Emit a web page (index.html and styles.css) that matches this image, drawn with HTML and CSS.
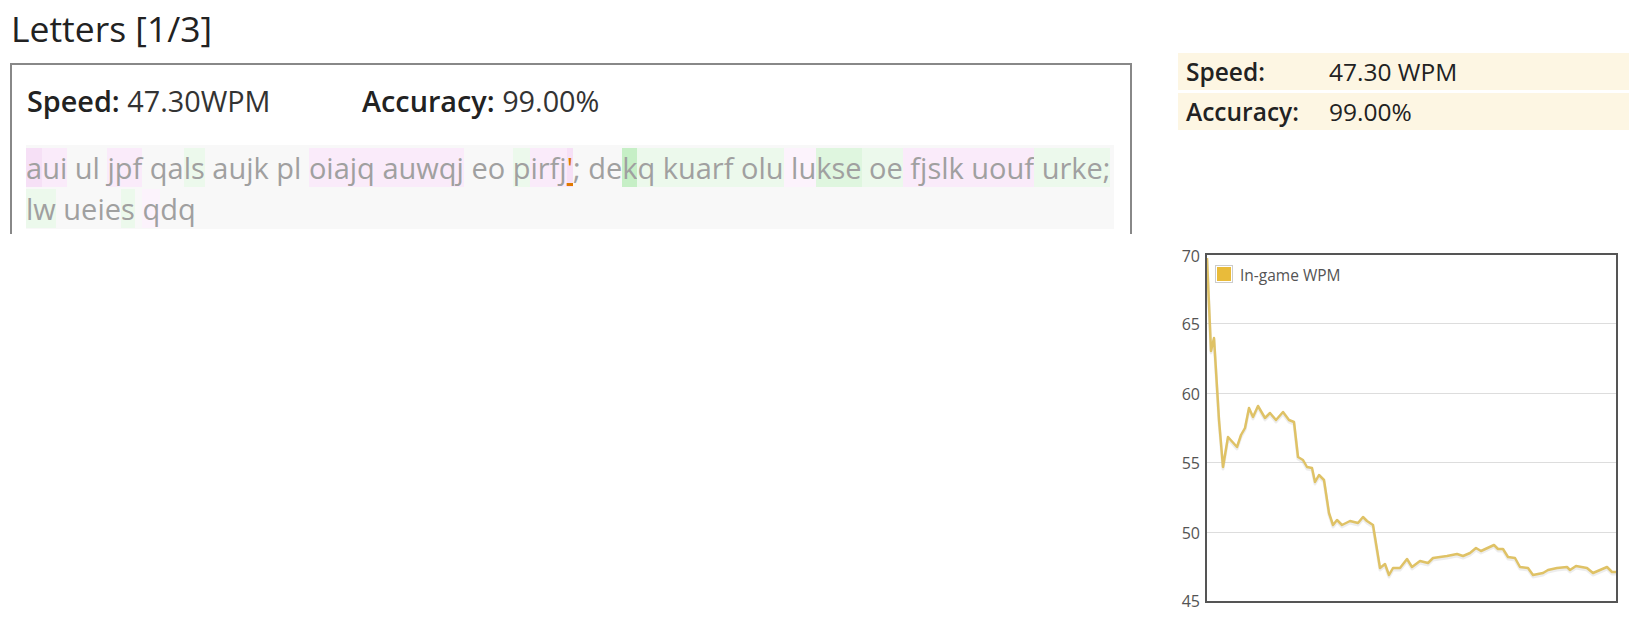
FILE: index.html
```html
<!DOCTYPE html>
<html>
<head>
<meta charset="utf-8">
<link rel="stylesheet" href="styles.css">
</head>
<body>
<div class="page">
  <div class="main">
    <h1 class="title">Letters [1/3]</h1>
    <div class="panel">
      <div class="stats">
        <div class="stat stat-speed"><b>Speed:</b> 47.30WPM</div>
        <div class="stat"><b>Accuracy:</b> 99.00%</div>
      </div>
      <div class="typed"><span class="p2">a</span><span class="p1">ui</span> ul <span class="p1">jpf</span> qa<span class="g1">ls</span> aujk pl <span class="p1">oiajq auwqj</span> eo <span class="g1">p</span><span class="p1">irfj</span><span class="p2 cur">'</span>; de<span class="g3">k</span><span class="g1">q kuarf olu</span><span class="p0"> lu</span><span class="g2">kse</span><span class="g1"> oe</span><span class="p1"> fjslk uouf</span><span class="g1"> urke;</span> <span class="g1">lw</span> ueie<span class="g1">s</span> <span class="p0">q</span>dq</div>
    </div>
  </div>
  <div class="side">
    <div class="summary">
      <div class="row"><span class="label">Speed:</span><span class="value">47.30 WPM</span></div>
      <div class="row"><span class="label">Accuracy:</span><span class="value">99.00%</span></div>
    </div>
    <svg class="chart" width="451" height="378" viewBox="0 0 451 378">
      <g class="grid">
        <line x1="29" y1="83.5" x2="438" y2="83.5"/>
        <line x1="29" y1="153.5" x2="438" y2="153.5"/>
        <line x1="29" y1="222.5" x2="438" y2="222.5"/>
        <line x1="29" y1="292.5" x2="438" y2="292.5"/>
      </g>
      <g class="ylabels">
        <text x="22" y="22">70</text>
        <text x="22" y="90">65</text>
        <text x="22" y="160">60</text>
        <text x="22" y="229">55</text>
        <text x="22" y="299">50</text>
        <text x="22" y="367">45</text>
      </g>
      <polyline class="shadow" points="29,18 33,111 36,98 41,180 45,227 50,197 59,207 63,195 67,188 71,168 75,177 80,166 87,178 92,173 98,180 105,172 111,180 116,182 120,217 125,220 129,227 134,228 137,242 141,235 146,240 151,273 155,285 159,280 164,285 172,281 180,283 185,277 189,281 195,285 202,328 207,324 211,335 215,328 222,328 229,319 234,327 242,321 250,323 255,318 269,316 279,314 285,316 292,313 298,308 303,311 316,305 320,309 325,309 330,317 337,318 342,327 350,328 355,335 365,333 370,330 379,328 389,327 392,330 398,326 409,328 415,333 429,327 434,332 438,332"/>
      <polyline class="series" points="29,18 33,111 36,98 41,180 45,227 50,197 59,207 63,195 67,188 71,168 75,177 80,166 87,178 92,173 98,180 105,172 111,180 116,182 120,217 125,220 129,227 134,228 137,242 141,235 146,240 151,273 155,285 159,280 164,285 172,281 180,283 185,277 189,281 195,285 202,328 207,324 211,335 215,328 222,328 229,319 234,327 242,321 250,323 255,318 269,316 279,314 285,316 292,313 298,308 303,311 316,305 320,309 325,309 330,317 337,318 342,327 350,328 355,335 365,333 370,330 379,328 389,327 392,330 398,326 409,328 415,333 429,327 434,332 438,332"/>
      <rect class="frame" x="28" y="14" width="411" height="348"/>
      <rect class="swatch-box" x="37.5" y="25.5" width="17" height="17"/>
      <rect class="swatch" x="39" y="27" width="14" height="14"/>
      <text class="legend" x="62" y="41">In-game WPM</text>
    </svg>
  </div>
</div>
</body>
</html>
```

FILE: styles.css
```css
html, body {
  margin: 0;
  padding: 0;
  background: #ffffff;
}

body {
  font-family: "Open Sans", "DejaVu Sans", sans-serif;
  color: #222222;
  overflow: hidden;
}

.page {
  display: flex;
  align-items: flex-start;
  padding-left: 10px;
}

.main {
  width: 1122px;
  flex: none;
}

.title {
  margin: 0;
  padding: 4px 0 0 1px;
  font-size: 35.5px;
  line-height: 48px;
  font-weight: normal;
  color: #222222;
}

.panel {
  margin-top: 11px;
  border: 2px solid #888888;
  border-bottom: none;
  padding: 17px 16px 5px 14px;
}

.stats {
  display: flex;
  font-size: 28.8px;
  line-height: 38px;
  color: #333333;
  padding-left: 1px;
}

.stat b {
  color: #222222;
  font-weight: 600;
}

.stat-speed {
  width: 335px;
}

.typed {
  margin-top: 25px;
  padding-top: 2px;
  background: #f8f8f8;
  color: #a0a0a0;
  font-size: 29px;
  line-height: 41px;
}

.p0 { background: #fcf3fc; }
.p1 { background: #faebfa; }
.p2 { background: #f6e0f6; }
.g1 { background: #ecf9ec; }
.g2 { background: #dff6df; }
.g3 { background: #c6efc6; }

.cur {
  color: #e07a00;
  text-decoration: underline;
  text-decoration-color: #e07a00;
  text-decoration-thickness: 3px;
  text-underline-offset: 4px;
}

.side {
  margin-left: 46px;
  width: 451px;
  flex: none;
}

.summary {
  margin-top: 53px;
  display: flex;
  flex-direction: column;
  gap: 3px;
}

.row {
  display: grid;
  grid-template-columns: 143px 1fr;
  height: 37px;
  line-height: 37px;
  padding-left: 8px;
  background: #fdf6e3;
  font-size: 24.5px;
  color: #222222;
}

.label {
  font-weight: 600;
}

.chart {
  display: block;
  margin-top: 110px;
  font-family: "Open Sans", "DejaVu Sans", sans-serif;
}

.grid line {
  stroke: #dddddd;
  stroke-width: 1;
}

.ylabels text {
  font-size: 16px;
  fill: #545454;
  text-anchor: end;
}

.frame {
  fill: none;
  stroke: #555555;
  stroke-width: 2;
}

.series {
  fill: none;
  stroke: #dfc266;
  stroke-width: 2.5;
  stroke-linejoin: round;
}

.shadow {
  fill: none;
  stroke: rgba(0, 0, 0, 0.07);
  stroke-width: 3;
  stroke-linejoin: round;
  transform: translate(0px, 2px);
}

.swatch-box {
  fill: #ffffff;
  stroke: #cccccc;
  stroke-width: 1;
}

.swatch {
  fill: #e9bb3a;
}

.legend {
  font-size: 15.5px;
  fill: #545454;
}
```
